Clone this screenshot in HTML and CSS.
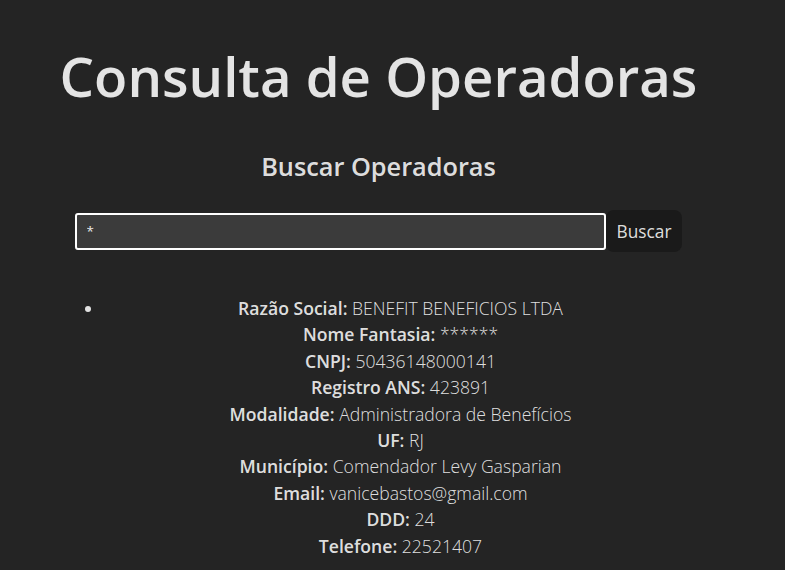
FILE: index.html
```html
<!DOCTYPE html>
<html lang="pt-BR">
<head>
<meta charset="utf-8">
<title>Consulta de Operadoras</title>
<link rel="stylesheet" href="styles.css">
</head>
<body>
<div class="app">
  <h1 class="title">Consulta de Operadoras</h1>
  <h2 class="subtitle">Buscar Operadoras</h2>
  <div class="search">
    <input class="search-input" type="text" value="*">
    <button class="search-btn" type="button">Buscar</button>
  </div>
  <ul class="results">
    <li class="result">
      <div class="field"><strong>Razão Social:</strong> BENEFIT BENEFICIOS LTDA</div>
      <div class="field"><strong>Nome Fantasia:</strong> ******</div>
      <div class="field"><strong>CNPJ:</strong> 50436148000141</div>
      <div class="field"><strong>Registro ANS:</strong> 423891</div>
      <div class="field"><strong>Modalidade:</strong> Administradora de Benefícios</div>
      <div class="field"><strong>UF:</strong> RJ</div>
      <div class="field"><strong>Município:</strong> Comendador Levy Gasparian</div>
      <div class="field"><strong>Email:</strong> vanicebastos@gmail.com</div>
      <div class="field"><strong>DDD:</strong> 24</div>
      <div class="field"><strong>Telefone:</strong> 22521407</div>
    </li>
  </ul>
</div>
</body>
</html>
```
FILE: styles.css
```css
html, body {
  margin: 0;
  background: #242424;
}
body {
  font-family: "Open Sans", "Noto Sans", sans-serif;
  font-size: 16px;
  line-height: 1.5;
  color: rgba(255, 255, 255, 0.87);
}
.app {
  width: 757px;
  box-sizing: border-box;
  padding: 32px 32px 0;
  text-align: center;
}
.title {
  margin: 13px 0 0;
  font-size: 54.5px;
  line-height: 63px;
  font-weight: 600;
  color: #e4e4e4;
}
.subtitle {
  margin: 40px 0 0;
  font-size: 25.3px;
  line-height: 36px;
  font-weight: 600;
}
.search {
  margin-top: 26px;
  display: flex;
  justify-content: center;
  align-items: center;
}
.search-input {
  box-sizing: border-box;
  width: 531px;
  height: 37px;
  margin: 0;
  padding: 0 10px;
  border: 2px solid #ffffff;
  border-radius: 3px;
  background: #3b3b3b;
  color: #e8e8e8;
  font-family: inherit;
  font-size: 13.33px;
  outline: none;
}
.search-btn {
  box-sizing: border-box;
  height: 42px;
  margin: 0;
  padding: 0 10px;
  border: 1px solid transparent;
  border-radius: 8px;
  background: #1a1a1a;
  color: rgba(255, 255, 255, 0.87);
  font-family: inherit;
  font-size: 17.3px;
  font-weight: 400;
  cursor: pointer;
}
.results {
  margin: 43px 28px 0 32px;
  padding-left: 40px;
}
.result {
  font-size: 17.6px;
  line-height: 26.4px;
}
.field {
  font-weight: 300;
}
.field strong {
  font-weight: 600;
}
```
